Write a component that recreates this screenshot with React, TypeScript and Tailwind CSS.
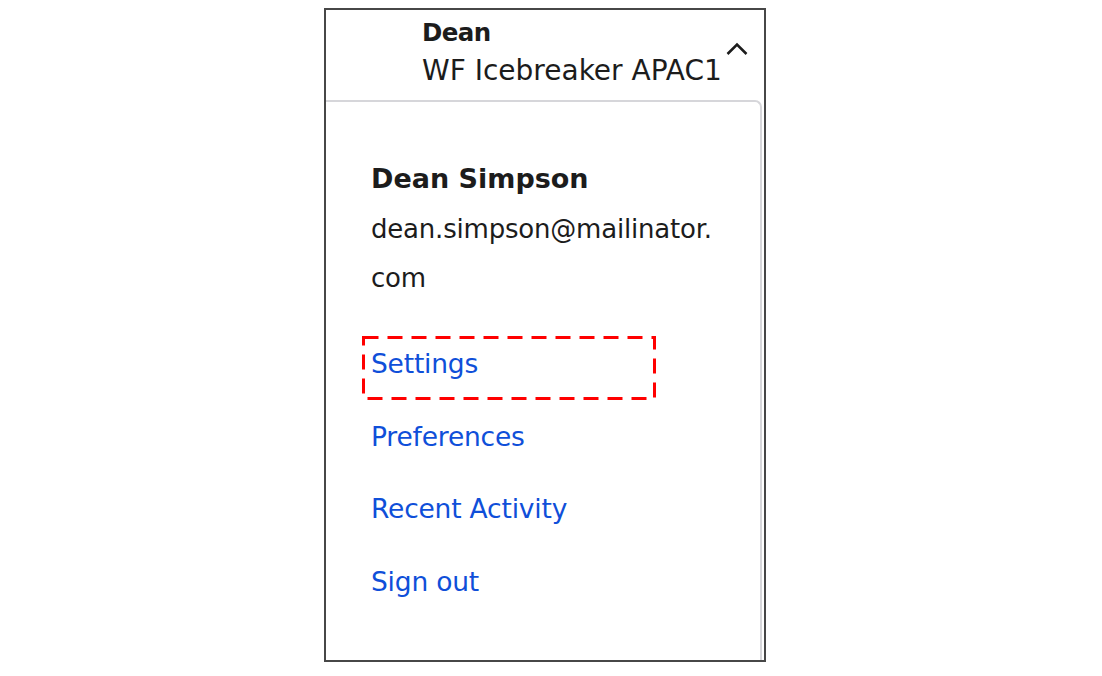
import React from 'react';

const links = ['Settings', 'Preferences', 'Recent Activity', 'Sign out'];

export default function App() {
  return (
    <div className="w-full h-[676px] bg-white" style={{ fontFamily: '"DejaVu Sans", Inter, sans-serif' }}>
      <div className="ml-[324px] pt-[8px]">
        <div className="w-[442px] h-[654px] border-2 border-[#474747] flex flex-col overflow-hidden">
          {/* header */}
          <div className="h-[90px] shrink-0 flex items-start pl-[96px] pr-[14px] pt-[4px]">
            <div className="flex-1 text-[28px] leading-[38px] text-[#1c1c1c]">
              <div className="font-bold text-[24.5px] tracking-[-0.6px]">Dean</div>
              <div>WF Icebreaker APAC1</div>
            </div>
            <svg width="24" height="14" viewBox="0 0 24 14" className="mt-[28px] mr-[1px]" fill="none">
              <polyline points="2.5,12 12,2.5 21.5,12" stroke="#1c1c1c" strokeWidth="2.5" />
            </svg>
          </div>

          {/* dropdown panel */}
          <div className="flex-1 mr-[2px] border-t-2 border-r-2 border-[#d6d6da] rounded-tr-[7px] pl-[45px] pt-[61px] text-[26.5px] tracking-[-0.2px] text-[#1c1c1c]">
            <div className="font-bold text-[27px] tracking-[0px] leading-[32px]">Dean Simpson</div>
            <div className="mt-[10px] leading-[49px] text-[26px]">
              dean.simpson@mailinator.
              <br />
              com
            </div>
            <div className="flex flex-col mt-[45px] gap-[40.7px]">
              {links.map((label, i) => (
                <div key={label} className="relative leading-[32px] text-[#0f4fd9]">
                  {label}
                  {i === 0 && (
                    <svg className="absolute left-[-9px] top-[-12px]" width="294" height="64" viewBox="0 0 294 64" fill="none">
                      <rect x="1.5" y="1.5" width="291" height="61" stroke="#ff0000" strokeWidth="3" strokeDasharray="15 9" />
                    </svg>
                  )}
                </div>
              ))}
            </div>
          </div>
        </div>
      </div>
    </div>
  );
}
